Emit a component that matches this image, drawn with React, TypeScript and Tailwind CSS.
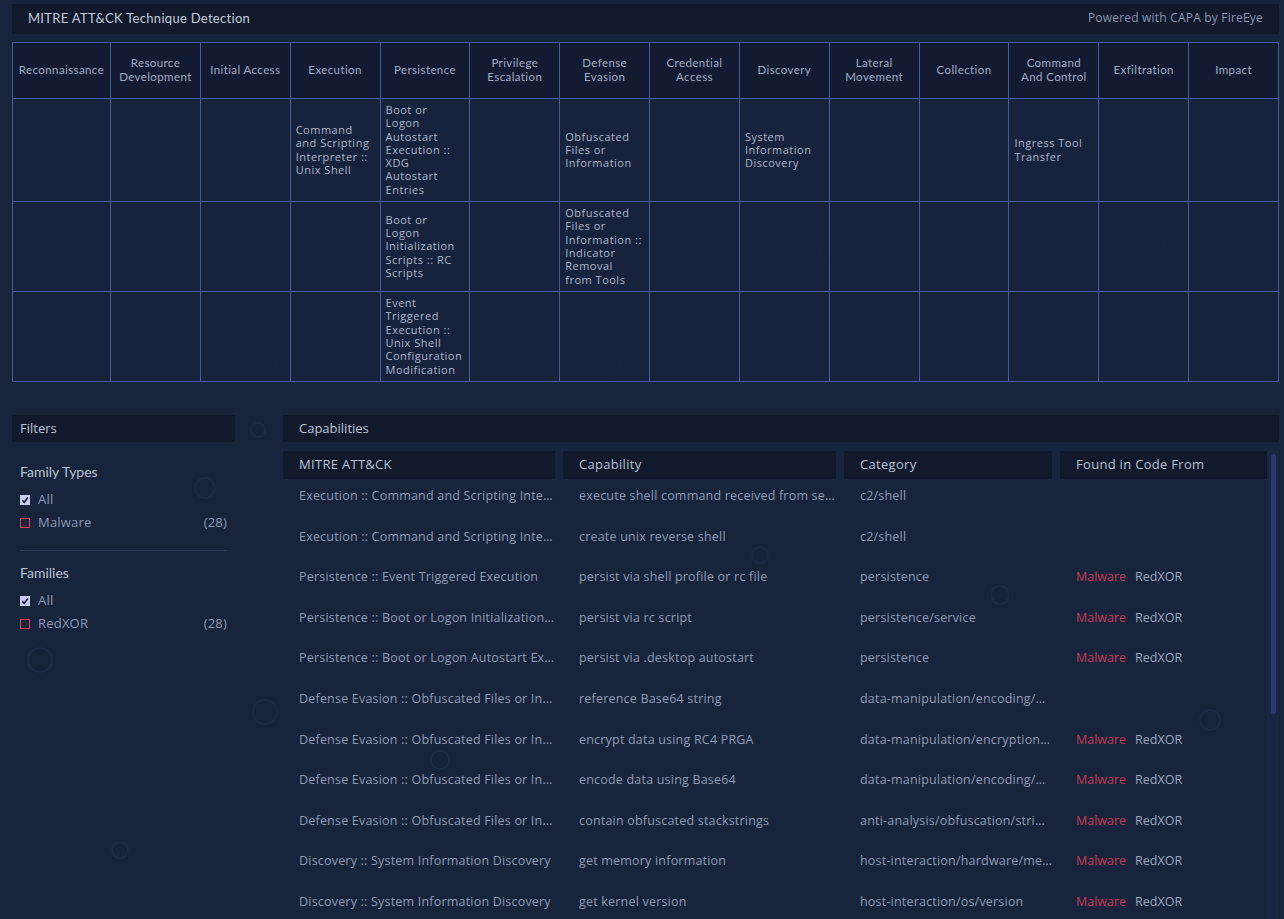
import React from 'react';

const tactics = [
  'Reconnaissance',
  'Resource\nDevelopment',
  'Initial Access',
  'Execution',
  'Persistence',
  'Privilege\nEscalation',
  'Defense\nEvasion',
  'Credential\nAccess',
  'Discovery',
  'Lateral\nMovement',
  'Collection',
  'Command\nAnd Control',
  'Exfiltration',
  'Impact',
];

// one entry per matrix row, keyed by column index
const matrix: { h: string; cells: Record<number, string> }[] = [
  {
    h: 'h-[103px]',
    cells: {
      3: 'Command\nand Scripting\nInterpreter ::\nUnix Shell',
      4: 'Boot or\nLogon\nAutostart\nExecution ::\nXDG\nAutostart\nEntries',
      6: 'Obfuscated\nFiles or\nInformation',
      8: 'System\nInformation\nDiscovery',
      11: 'Ingress Tool\nTransfer',
    },
  },
  {
    h: 'h-[90px]',
    cells: {
      4: 'Boot or\nLogon\nInitialization\nScripts :: RC\nScripts',
      6: 'Obfuscated\nFiles or\nInformation ::\nIndicator\nRemoval\nfrom Tools',
    },
  },
  {
    h: 'h-[90px]',
    cells: {
      4: 'Event\nTriggered\nExecution ::\nUnix Shell\nConfiguration\nModification',
    },
  },
];

interface Capability {
  attack: string;
  name: string;
  category: string;
  found: boolean;
}

const capabilities: Capability[] = [
  { attack: 'Execution :: Command and Scripting Interpreter', name: 'execute shell command received from server', category: 'c2/shell', found: false },
  { attack: 'Execution :: Command and Scripting Interpreter', name: 'create unix reverse shell', category: 'c2/shell', found: false },
  { attack: 'Persistence :: Event Triggered Execution', name: 'persist via shell profile or rc file', category: 'persistence', found: true },
  { attack: 'Persistence :: Boot or Logon Initialization Scripts', name: 'persist via rc script', category: 'persistence/service', found: true },
  { attack: 'Persistence :: Boot or Logon Autostart Execution', name: 'persist via .desktop autostart', category: 'persistence', found: true },
  { attack: 'Defense Evasion :: Obfuscated Files or Information', name: 'reference Base64 string', category: 'data-manipulation/encoding/base64', found: false },
  { attack: 'Defense Evasion :: Obfuscated Files or Information', name: 'encrypt data using RC4 PRGA', category: 'data-manipulation/encryption/rc4', found: true },
  { attack: 'Defense Evasion :: Obfuscated Files or Information', name: 'encode data using Base64', category: 'data-manipulation/encoding/base64', found: true },
  { attack: 'Defense Evasion :: Obfuscated Files or Information', name: 'contain obfuscated stackstrings', category: 'anti-analysis/obfuscation/string/stackstring', found: true },
  { attack: 'Discovery :: System Information Discovery', name: 'get memory information', category: 'host-interaction/hardware/memory', found: true },
  { attack: 'Discovery :: System Information Discovery', name: 'get kernel version', category: 'host-interaction/os/version', found: true },
  { attack: 'Discovery :: System Information Discovery', name: 'get hostname', category: 'host-interaction/os/hostname', found: true },
];

// faint rings in the page background
const rings = [
  [40, 250, 14], [120, 330, 9], [265, 365, 12], [470, 120, 10], [610, 365, 11],
  [705, 180, 9], [830, 255, 10], [990, 320, 8], [1175, 240, 12], [258, 430, 7],
  [205, 488, 10], [265, 712, 12], [40, 660, 12], [120, 850, 8], [1000, 595, 9],
  [760, 555, 8], [1210, 720, 10], [440, 760, 9],
];

const Checkbox: React.FC<{ checked?: boolean }> = ({ checked }) =>
  checked ? (
    <span className="w-[10px] h-[10px] bg-[#c8cdf0] flex items-center justify-center">
      <svg viewBox="0 0 10 10" className="w-[8px] h-[8px]">
        <path d="M1.5 5.2 L4 7.8 L8.6 1.8" fill="none" stroke="#141d35" strokeWidth="2" />
      </svg>
    </span>
  ) : (
    <span className="w-[10px] h-[10px] border-[1.5px] border-[#e2405c]" />
  );

const FilterRow: React.FC<{ label: string; count?: number; checked?: boolean }> = ({ label, count, checked }) => (
  <div className="flex items-center h-[23px] text-[13px] tracking-[0.2px] text-[#8e9ab4]">
    <Checkbox checked={checked} />
    <span className="ml-2 flex-1">{label}</span>
    {count !== undefined && <span>({count})</span>}
  </div>
);

const App: React.FC = () => {
  return (
    <div className="relative h-[919px] overflow-hidden bg-[#18243c] pl-3 pr-[5px] pt-1 font-['Open_Sans',sans-serif]">
      <svg className="absolute inset-0 w-full h-full pointer-events-none" viewBox="0 0 1284 919">
        {rings.map(([x, y, r], i) => (
          <circle key={i} cx={x} cy={y} r={r} fill="none" stroke="#1e2b47" strokeWidth="1.5" />
        ))}
      </svg>

      <div className="relative">
        <div className="h-[30px] bg-[#111a2d] flex items-center justify-between pl-4 pr-4">
          <span className="text-[13px] tracking-[0.3px] text-[#c2c9d9] font-['Lato',sans-serif]">MITRE ATT&amp;CK Technique Detection</span>
          <span className="text-[12px] tracking-[0.2px] text-[#8a96b0] -mt-[3px]">Powered with CAPA by FireEye</span>
        </div>

        <table className="mt-2 w-full table-fixed border-collapse">
          <colgroup>
            <col className="w-[98px]" />
            {tactics.slice(1).map((t) => (
              <col key={t} />
            ))}
          </colgroup>
          <thead>
            <tr className="h-[56px] bg-[#121b30]/90">
              {tactics.map((t) => (
                <th
                  key={t}
                  className="border border-[#4a5b98] px-1 pb-px font-normal text-center whitespace-pre-line text-[11.5px] leading-[14px] tracking-[0.4px] text-[#a1abc1] font-['Lato',sans-serif]"
                >
                  {t}
                </th>
              ))}
            </tr>
          </thead>
          <tbody>
            {matrix.map((row, ri) => (
              <tr key={ri} className={row.h + ' bg-[#17233d]/85'}>
                {tactics.map((t, ci) => (
                  <td
                    key={t}
                    className="border border-[#4a5b98] px-[5px] pb-px align-middle whitespace-pre-line text-[11px] leading-[13.3px] tracking-[0.5px] text-[#adb6c9]"
                  >
                    {row.cells[ci] ?? ''}
                  </td>
                ))}
              </tr>
            ))}
          </tbody>
        </table>

        <div className="mt-[33px] flex gap-12">
          <div className="w-[223px] shrink-0">
            <div className="h-[27px] bg-[#111a2d] flex items-center px-2 text-[13px] text-[#bcc4d5]">
              Filters
            </div>
            <div className="px-2">
              <div className="mt-[20px] mb-[6px] text-[14px] leading-[20px] text-[#b9c2d3] font-['Lato',sans-serif]">Family Types</div>
              <FilterRow label="All" checked />
              <FilterRow label="Malware" count={28} />
              <div className="mt-[16px] h-px bg-[#2a3653]" />
              <div className="mt-[12px] mb-[6px] text-[14px] leading-[20px] text-[#b9c2d3] font-['Lato',sans-serif]">Families</div>
              <FilterRow label="All" checked />
              <FilterRow label="RedXOR" count={28} />
            </div>
          </div>

          <div className="flex-1 min-w-0">
            <div className="h-[27px] bg-[#111a2d] flex items-center px-4 text-[13px] text-[#bcc4d5]">
              Capabilities
            </div>
            <div className="mt-[9px] flex">
              <div className="flex-1 min-w-0">
                <div className="grid grid-cols-[272px_273px_208px_207px] gap-x-2">
                  {['MITRE ATT&CK', 'Capability', 'Category', 'Found in Code From'].map((h) => (
                    <div key={h} className="h-[28px] bg-[#111a2d] flex items-center pl-4 text-[13px] text-[#b8c0d3] tracking-[0.3px]">
                      {h}
                    </div>
                  ))}
                </div>
                {capabilities.map((c, i) => (
                  <div key={i} className="grid grid-cols-[272px_273px_208px_207px] gap-x-2 h-[40.6px] pt-2 text-[12.5px] leading-[18px] tracking-[0.2px] text-[#8f9bb3]">
                    <div className="pl-4 truncate">{c.attack}</div>
                    <div className="pl-4 truncate">{c.name}</div>
                    <div className="pl-4 truncate">{c.category}</div>
                    <div className="pl-4 flex gap-[9px] tracking-normal">
                      {c.found && (
                        <>
                          <span className="text-[#c23a56]">Malware</span>
                          <span className="text-[#9ca7bf]">RedXOR</span>
                        </>
                      )}
                    </div>
                  </div>
                ))}
              </div>
              <div className="w-3 shrink-0 bg-[#1b2742] pt-[3px] flex justify-center">
                <div className="w-[5px] h-[260px] rounded-full bg-[#2d3870]" />
              </div>
            </div>
          </div>
        </div>
      </div>
    </div>
  );
};

export default App;
